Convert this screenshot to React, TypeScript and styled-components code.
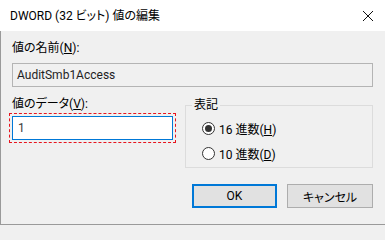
import * as React from 'react';
import styled, { createGlobalStyle } from 'styled-components';

const GlobalStyle = createGlobalStyle`
  html, body {
    margin: 0;
    padding: 0;
    background: #f0f0f0;
  }
  body {
    font-family: Roboto, 'Noto Sans CJK JP', sans-serif;
    font-size: 12px;
    font-feature-settings: 'palt';
    color: #000;
  }
`;

const Dialog = styled.div`
  width: 385px;
  height: 225px;
  display: flex;
  flex-direction: column;
  overflow: hidden;
`;

const TitleBar = styled.div`
  height: 31px;
  flex-shrink: 0;
  background: #fff;
  display: flex;
  align-items: center;
  justify-content: space-between;
  padding: 0 11px 0 10px;
  line-height: 16px;
`;

const Title = styled.span`
  font-size: 12px;
`;

const CloseButton = styled.span`
  display: flex;
  width: 12px;
  height: 12px;
`;

const Body = styled.div`
  flex: 1;
  background: #f0f0f0;
  border-left: 1px solid #9a9a9a;
  border-bottom: 1px solid #9a9a9a;
  padding: 9px 12px 0 11px;
  display: flex;
  flex-direction: column;
`;

const Label = styled.div`
  line-height: 16px;
  height: 16px;
  white-space: nowrap;
`;

const TextBox = styled.div<{ $active?: boolean }>`
  box-sizing: border-box;
  height: 24px;
  border: 1px solid ${(p) => (p.$active ? '#0078d7' : '#b4b4b4')};
  background: ${(p) => (p.$active ? '#ffffff' : '#f0f0f0')};
  color: ${(p) => (p.$active ? '#3a3a3a' : '#1e1e1e')};
  display: flex;
  align-items: center;
  padding-left: ${(p) => (p.$active ? '5px' : '4px')};
`;

const NameBox = styled(TextBox)`
  margin-top: 7px;
`;

const Row = styled.div`
  margin-top: 9px;
  display: grid;
  grid-template-columns: 164px 1fr;
  column-gap: 9px;
  align-items: start;
`;

const DataColumn = styled.div`
  display: flex;
  flex-direction: column;
`;

const FocusRing = styled.div`
  box-sizing: border-box;
  margin: 1px 0 0 -3px;
  width: calc(100% + 3px);
  padding: 2px;
  border: 1px dashed #e8141e;
`;

const GroupBox = styled.div`
  position: relative;
  box-sizing: border-box;
  margin-top: 9px;
  height: 63px;
  border: 1px solid #dcdcdc;
  padding: 14px 0 0 16px;
  display: flex;
  flex-direction: column;
  gap: 9px;
`;

const Legend = styled.span`
  position: absolute;
  top: -9px;
  left: 6px;
  padding: 0 2px;
  line-height: 16px;
  background: #f0f0f0;
`;

const RadioRow = styled.div`
  display: flex;
  align-items: center;
  height: 16px;
  gap: 4px;
`;

const RadioCircle = styled.span<{ $checked?: boolean }>`
  box-sizing: border-box;
  width: 13px;
  height: 13px;
  border-radius: 50%;
  border: 1px solid #333;
  background: #fff;
  display: flex;
  align-items: center;
  justify-content: center;

  &::after {
    content: '';
    display: ${(p) => (p.$checked ? 'block' : 'none')};
    width: 7px;
    height: 7px;
    border-radius: 50%;
    background: #333;
  }
`;

const ButtonRow = styled.div`
  margin-top: 16px;
  display: flex;
  justify-content: flex-end;
  gap: 10px;
`;

const Button = styled.div<{ $primary?: boolean; $width: number }>`
  box-sizing: border-box;
  width: ${(p) => p.$width}px;
  height: 24px;
  background: #e1e1e1;
  border: ${(p) => (p.$primary ? '2px solid #0078d7' : '1px solid #adadad')};
  display: flex;
  align-items: center;
  justify-content: center;
`;

const Radio = ({ checked, children }: { checked?: boolean; children: React.ReactNode }) => (
  <RadioRow>
    <RadioCircle $checked={checked} />
    <span>{children}</span>
  </RadioRow>
);

export default function App() {
  return (
    <Dialog>
      <GlobalStyle />
      <TitleBar>
        <Title>DWORD (32 ビット) 値の編集</Title>
        <CloseButton>
          <svg width="12" height="12" viewBox="0 0 12 12">
            <path d="M1 1 L11 11 M11 1 L1 11" stroke="#111" strokeWidth="1" fill="none" />
          </svg>
        </CloseButton>
      </TitleBar>
      <Body>
        <Label>
          値の名前(<u>N</u>):
        </Label>
        <NameBox>AuditSmb1Access</NameBox>
        <Row>
          <DataColumn>
            <Label>
              値のデータ(<u>V</u>):
            </Label>
            <FocusRing>
              <TextBox $active>1</TextBox>
            </FocusRing>
          </DataColumn>
          <GroupBox>
            <Legend>表記</Legend>
            <Radio checked>
              16 進数(<u>H</u>)
            </Radio>
            <Radio>
              10 進数(<u>D</u>)
            </Radio>
          </GroupBox>
        </Row>
        <ButtonRow>
          <Button $primary $width={85}>
            OK
          </Button>
          <Button $width={86}>キャンセル</Button>
        </ButtonRow>
      </Body>
    </Dialog>
  );
}
